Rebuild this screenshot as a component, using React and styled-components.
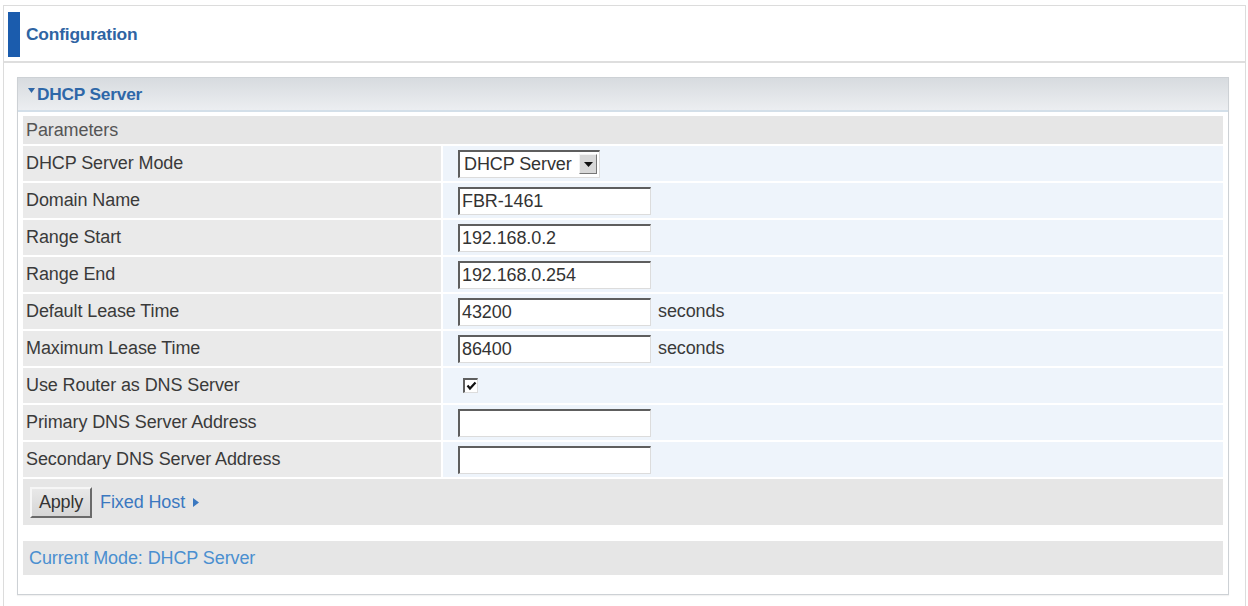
import React from 'react';
import styled, { createGlobalStyle } from 'styled-components';

const GlobalStyle = createGlobalStyle`
  html, body {
    margin: 0;
    padding: 0;
    background: #fff;
    font-family: "Liberation Sans", Arial, sans-serif;
  }
`;

const fields = [
  { label: 'DHCP Server Mode', type: 'select', value: 'DHCP Server' },
  { label: 'Domain Name', type: 'text', value: 'FBR-1461' },
  { label: 'Range Start', type: 'text', value: '192.168.0.2' },
  { label: 'Range End', type: 'text', value: '192.168.0.254' },
  { label: 'Default Lease Time', type: 'text', value: '43200', unit: 'seconds' },
  { label: 'Maximum Lease Time', type: 'text', value: '86400', unit: 'seconds' },
  { label: 'Use Router as DNS Server', type: 'check', value: true },
  { label: 'Primary DNS Server Address', type: 'text', value: '' },
  { label: 'Secondary DNS Server Address', type: 'text', value: '' },
];

const App = () => {
  return (
    <>
      <GlobalStyle />
      <Page>
        <Frame>
          <TitleBar>
            <TitleMark />
            <Title>Configuration</Title>
          </TitleBar>

          <Content>
            <Section>
              <SectionHeader>
                <svg width="7" height="5" viewBox="0 0 7 5">
                  <path d="M0 0h7L3.5 5z" fill="#2e67a8" />
                </svg>
                DHCP Server
              </SectionHeader>

              <SectionBody>
                <Grid>
                  <GroupRow>Parameters</GroupRow>
                  {fields.map((f) => (
                    <React.Fragment key={f.label}>
                      <LabelCell>{f.label}</LabelCell>
                      <ValueCell>
                        {f.type === 'select' && (
                          <SelectBox>
                            <span>{f.value}</span>
                            <SelectArrow>
                              <svg width="9" height="5" viewBox="0 0 9 5">
                                <path d="M0 0h9L4.5 5z" fill="#111" />
                              </svg>
                            </SelectArrow>
                          </SelectBox>
                        )}
                        {f.type === 'text' && <TextInput defaultValue={f.value} />}
                        {f.type === 'check' && (
                          <CheckBox>
                            <svg width="11" height="10" viewBox="0 0 11 10">
                              <path d="M1.5 4.5 L4 7.5 L9.5 1.5" stroke="#111" strokeWidth="2.2" fill="none" />
                            </svg>
                          </CheckBox>
                        )}
                        {f.unit && <Unit>{f.unit}</Unit>}
                      </ValueCell>
                    </React.Fragment>
                  ))}
                </Grid>

                <ActionRow>
                  <ApplyButton>Apply</ApplyButton>
                  <LinkText>
                    Fixed Host
                    <svg width="6" height="9" viewBox="0 0 6 9">
                      <path d="M0 0L6 4.5L0 9z" fill="#3b78c0" />
                    </svg>
                  </LinkText>
                </ActionRow>

                <StatusRow>Current Mode: DHCP Server</StatusRow>
              </SectionBody>
            </Section>
          </Content>
        </Frame>
      </Page>
    </>
  );
};

const Page = styled.div`
  padding: 5px 2px 0 3px;
  height: 606px;
  box-sizing: border-box;
`;

const Frame = styled.div`
  border: 1px solid #dcdcdc;
  border-bottom: none;
  height: 100%;
  box-sizing: border-box;
`;

const TitleBar = styled.div`
  display: flex;
  align-items: center;
  gap: 6px;
  padding: 6px 4px 4px;
  border-bottom: 2px solid #dedede;
`;

const TitleMark = styled.div`
  width: 12px;
  height: 45px;
  background: #1b5cad;
`;

const Title = styled.div`
  font-size: 17.4px;
  font-weight: bold;
  color: #2f64a3;
  letter-spacing: -0.2px;
`;

const Content = styled.div`
  padding: 14px 16px 0 13px;
`;

const Section = styled.div`
  border: 1px solid #cdd1d5;
  box-shadow: 0 1px 1px rgba(0, 0, 0, 0.05);
`;

const SectionHeader = styled.div`
  height: 32px;
  display: flex;
  align-items: center;
  gap: 2px;
  padding-left: 10px;
  background: linear-gradient(#d7dbdf, #eceef1);
  border-bottom: 2px solid #d3dfe9;
  font-size: 17.3px;
  font-weight: bold;
  color: #2e67a8;
  letter-spacing: -0.2px;

  svg {
    margin-top: -8px;
  }
`;

const SectionBody = styled.div`
  padding: 4px 5px 19px;
`;

const Grid = styled.div`
  display: grid;
  grid-template-columns: 418px 1fr;
  grid-template-rows: 28px;
  grid-auto-rows: 35px;
  gap: 2px;
`;

const Cell = styled.div`
  display: flex;
  align-items: center;
  font-size: 18px;
  color: #3a3a3a;
  letter-spacing: -0.1px;
`;

const GroupRow = styled(Cell)`
  grid-column: 1 / -1;
  background: #e6e6e6;
  padding-left: 3px;
  color: #555;
`;

const LabelCell = styled(Cell)`
  background: #eaeaea;
  padding-left: 3px;
`;

const ValueCell = styled(Cell)`
  background: #eef4fb;
  padding-left: 15px;
  gap: 7px;
`;

const insetBorder = `
  border-style: solid;
  border-width: 2px 1px 1px 2px;
  border-color: #5e5e5e #dcdcdc #dcdcdc #5e5e5e;
`;

const TextInput = styled.input`
  ${insetBorder}
  width: 193px;
  height: 28px;
  box-sizing: border-box;
  padding: 0 2px;
  font-family: "Liberation Sans", Arial, sans-serif;
  font-size: 18px;
  letter-spacing: -0.1px;
  color: #333;
  background: #fff;
  outline: none;
`;

const SelectBox = styled.div`
  ${insetBorder}
  width: 142px;
  height: 28px;
  box-sizing: border-box;
  display: flex;
  align-items: center;
  justify-content: space-between;
  padding: 0 2px 0 4px;
  background: #fff;
  color: #333;
  font-size: 18px;
`;

const SelectArrow = styled.span`
  width: 18px;
  height: 20px;
  display: flex;
  align-items: center;
  justify-content: center;
  background: #d8d8d8;
  border: 1px solid;
  border-color: #f4f4f4 #777 #777 #f4f4f4;
  box-sizing: border-box;
`;

const CheckBox = styled.span`
  ${insetBorder}
  width: 15px;
  height: 15px;
  box-sizing: border-box;
  margin-left: 5px;
  display: flex;
  align-items: center;
  justify-content: center;
  background: #fff;
`;

const Unit = styled.span`
  color: #3a3a3a;
`;

const ActionRow = styled.div`
  margin-top: 2px;
  height: 46px;
  background: #e6e6e6;
  display: flex;
  align-items: center;
  gap: 8px;
  padding-left: 7px;
`;

const ApplyButton = styled.button`
  height: 31px;
  padding: 0 7px;
  font-family: "Liberation Sans", Arial, sans-serif;
  font-size: 18px;
  letter-spacing: -0.2px;
  color: #333;
  background: linear-gradient(#e8e8e8, #d6d6d6);
  border: 2px solid;
  border-color: #f6f6f6 #6a6a6a #6a6a6a #f6f6f6;
  cursor: pointer;
`;

const LinkText = styled.span`
  display: flex;
  align-items: center;
  gap: 8px;
  font-size: 18px;
  letter-spacing: -0.1px;
  color: #3b78c0;
  cursor: pointer;
`;

const StatusRow = styled.div`
  margin-top: 16px;
  height: 34px;
  background: #e6e6e6;
  display: flex;
  align-items: center;
  padding-left: 6px;
  font-size: 18px;
  letter-spacing: -0.1px;
  color: #4a8fd0;
`;

export default App;
